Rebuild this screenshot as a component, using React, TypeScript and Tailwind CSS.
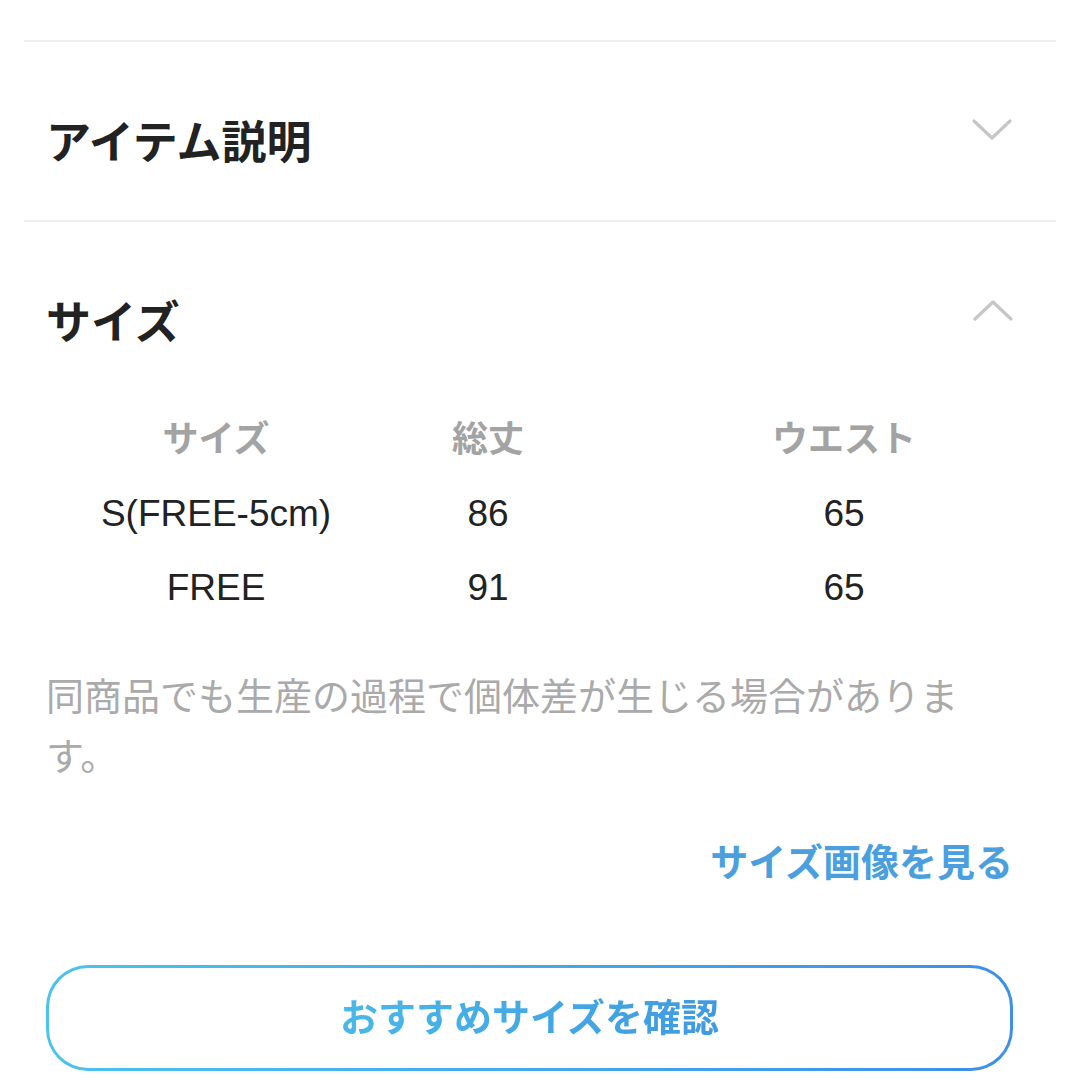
import React from 'react';

const font = { fontFamily: '"Liberation Sans", "Noto Sans CJK JP", sans-serif' };

const Chevron = ({ up }: { up?: boolean }) => (
  <svg width="40" height="22" viewBox="0 0 40 22" fill="none">
    <polyline
      points={up ? '2,20 20,3 38,20' : '2,2 20,19 38,2'}
      stroke="#c6c6c6"
      strokeWidth="3.2"
      strokeLinecap="round"
      strokeLinejoin="round"
    />
  </svg>
);

const rows = [
  { size: 'S(FREE-5cm)', length: '86', waist: '65' },
  { size: 'FREE', length: '91', waist: '65' },
];

export default function App() {
  return (
    <div className="w-[1080px] h-[1080px] bg-white overflow-hidden px-6" style={font}>
      <div className="h-[40px]" />
      <div className="h-[2px] bg-[#efefef]" />

      {/* アイテム説明 */}
      <div className="flex justify-between pl-[22px] pr-[44px] pt-[79px] h-[178px]">
        <h2 className="text-[45px] leading-[45px] font-bold text-[#222]">アイテム説明</h2>
        <div className="-mt-[2px]">
          <Chevron />
        </div>
      </div>
      <div className="h-[2px] bg-[#efefef]" />

      {/* サイズ */}
      <div className="pl-[22px] pr-[43px]">
        <div className="flex justify-between pt-[79px]">
          <h2 className="text-[45px] leading-[45px] font-bold text-[#222]">サイズ</h2>
          <div className="-mt-[2px]">
            <Chevron up />
          </div>
        </div>

        <div className="mt-[57px] grid grid-cols-[340px_204px_424px]">
          <div className="h-[74px] flex items-center justify-center text-[36px] font-bold text-[#a3a3a3]">サイズ</div>
          <div className="h-[74px] flex items-center justify-center text-[36px] font-bold text-[#a3a3a3]">総丈</div>
          <div className="h-[74px] flex items-center justify-center pl-[84px] text-[36px] font-bold text-[#a3a3a3]">ウエスト</div>
          {rows.map((r) => (
            <React.Fragment key={r.size}>
              <div className="h-[74px] flex items-center justify-center text-[37px] text-[#222]">{r.size}</div>
              <div className="h-[74px] flex items-center justify-center text-[37px] text-[#222]">{r.length}</div>
              <div className="h-[74px] flex items-center justify-center pl-[84px] text-[37px] text-[#222]">{r.waist}</div>
            </React.Fragment>
          ))}
        </div>

        <p className="mt-[42px] w-[930px] text-[38px] leading-[60px] text-[#aaaaaa]">
          同商品でも生産の過程で個体差が生じる場合があります。
        </p>

        <div className="mt-[52px] flex justify-end">
          <a className="text-[38px] leading-[48px] font-bold text-[#4b9fdf]">サイズ画像を見る</a>
        </div>

        <div className="mt-[78px] w-[967px] h-[106px] rounded-[42px] p-[3px] bg-gradient-to-r from-[#4cc3eb] to-[#3e8fe6]">
          <button className="w-full h-full rounded-[39px] bg-white flex items-center justify-center">
            <span className="text-[38px] font-bold bg-gradient-to-r from-[#49b8e8] to-[#3f9ae2] bg-clip-text text-transparent">
              おすすめサイズを確認
            </span>
          </button>
        </div>
      </div>
    </div>
  );
}
